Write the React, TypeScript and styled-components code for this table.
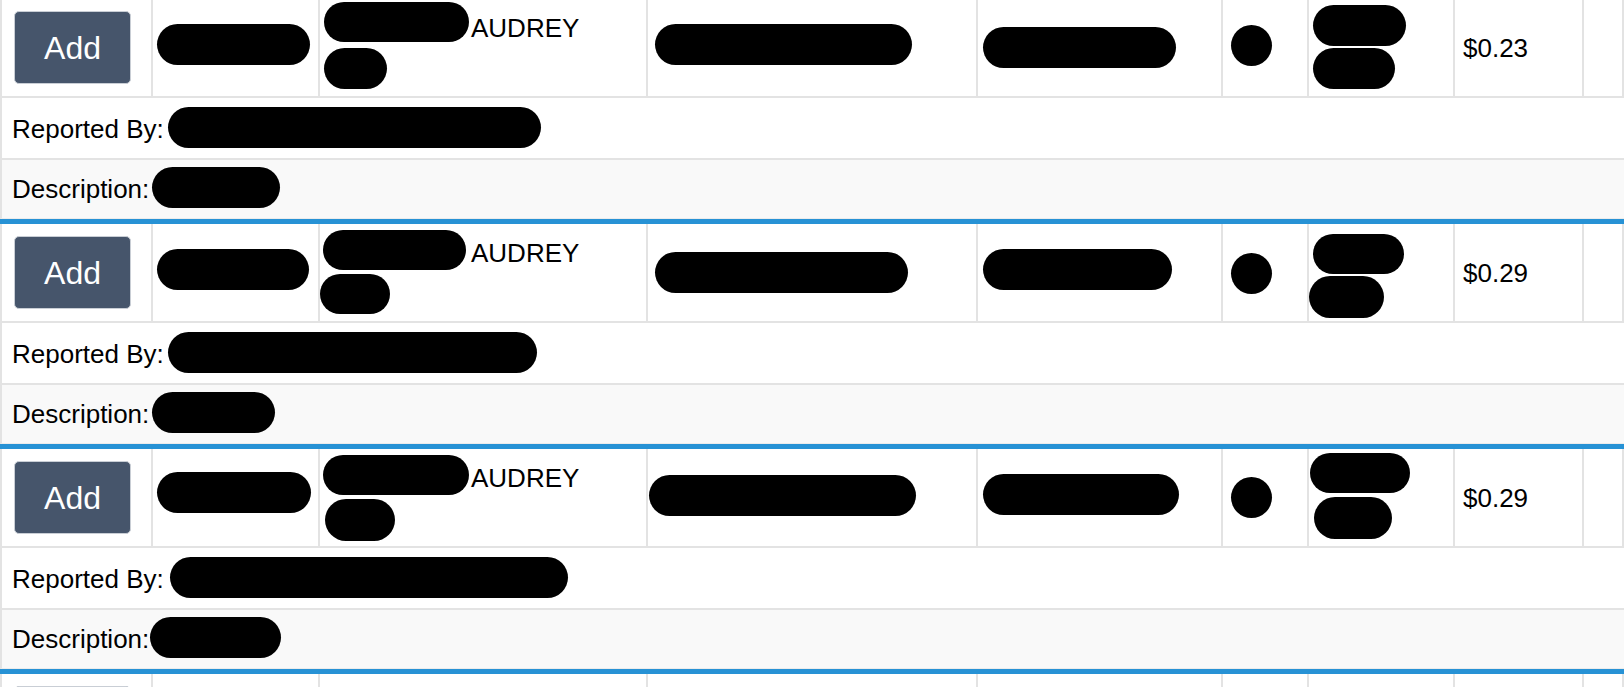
import React from 'react';
import styled, { createGlobalStyle } from 'styled-components';

const GlobalStyle = createGlobalStyle`
  html, body {
    margin: 0;
    padding: 0;
    background: #ffffff;
    overflow: hidden;
  }
  body {
    font-family: "Liberation Sans", Arial, Helvetica, sans-serif;
    font-size: 26px;
    color: #000000;
  }
`;

const GRID = '#e3e3e3';
const BLUE = '#2792d5';

type Pill = { w: number; h?: number; dx?: number; s?: number; top?: number };

interface GroupData {
  code: Pill;
  nameA: Pill;
  nameB?: Pill;
  first: string;
  firstGap: number;
  loc: Pill;
  type: Pill;
  dot: Pill;
  tags: Pill[];
  tagGap: number;
  tagShift: number;
  price: string;
  reporter: Pill;
  desc: Pill;
  partial?: boolean;
}

const groups: GroupData[] = [
  {
    code: { w: 153, s: -3 },
    nameA: { w: 145, h: 40, dx: 0, top: 0 },
    nameB: { w: 63, h: 41, dx: 0, top: 0 },
    first: 'AUDREY',
    firstGap: 2,
    loc: { w: 257, s: -3 },
    type: { w: 193, s: 0 },
    dot: { w: 41, h: 41, s: -2 },
    tags: [
      { w: 93, dx: 4 },
      { w: 82, dx: 4 },
    ],
    tagGap: 2,
    tagShift: -1,
    price: '$0.23',
    reporter: { w: 373, dx: 4 },
    desc: { w: 128, dx: 3 },
  },
  {
    code: { w: 152, s: -3 },
    nameA: { w: 143, h: 40, dx: -1, top: 3 },
    nameB: { w: 70, h: 40, dx: -4, top: 1 },
    first: 'AUDREY',
    firstGap: 5,
    loc: { w: 253, s: 0 },
    type: { w: 189, s: -3 },
    dot: { w: 41, h: 41, s: 1 },
    tags: [
      { w: 91, h: 40, dx: 4 },
      { w: 75, h: 42, dx: 0 },
    ],
    tagGap: 2,
    tagShift: 3.5,
    price: '$0.29',
    reporter: { w: 369, dx: 4 },
    desc: { w: 123, dx: 3 },
  },
  {
    code: { w: 154, s: -5 },
    nameA: { w: 146, h: 40, dx: -1, top: 3 },
    nameB: { w: 70, h: 42, dx: 1, top: 1 },
    first: 'AUDREY',
    firstGap: 2,
    loc: { w: 267, s: -2, dx: -6 },
    type: { w: 196, s: -3 },
    dot: { w: 41, h: 41, s: 0 },
    tags: [
      { w: 100, h: 40, dx: 1 },
      { w: 78, h: 42, dx: 5 },
    ],
    tagGap: 4,
    tagShift: -1.5,
    price: '$0.29',
    reporter: { w: 398, dx: 6 },
    desc: { w: 131, dx: 1 },
  },
];

/* ---------- layout ---------- */

const Table = styled.main`
  margin-top: -1px;
  width: 100%;
`;

const Group = styled.section`
  border-bottom: 5px solid ${BLUE};
`;

const MainRow = styled.div`
  display: grid;
  grid-template-columns: 151px 167px 328px 330px 245px 86px 146px 129px 1fr;
  height: 99px;
  box-sizing: border-box;
  border-left: 2px solid ${GRID};
  border-bottom: 2px solid ${GRID};
  background: #ffffff;
`;

const Cell = styled.div<{ $pl?: number }>`
  display: flex;
  align-items: center;
  min-width: 0;
  box-sizing: border-box;
  padding-left: ${(p) => p.$pl ?? 8}px;
  border-right: 2px solid ${GRID};
  overflow: hidden;
`;

const NameCell = styled(Cell)`
  flex-direction: column;
  align-items: flex-start;
  justify-content: flex-start;
  padding-top: 3px;
`;

const NameLine = styled.div`
  display: flex;
  align-items: flex-start;
  height: 46px;
`;

const FirstName = styled.span<{ $gap: number }>`
  margin: 12px 0 0 ${(p) => p.$gap}px;
  line-height: 29px;
  white-space: nowrap;
`;

const TagStack = styled.div<{ $gap: number; $mt: number; $mb: number }>`
  display: flex;
  flex-direction: column;
  align-items: flex-start;
  gap: ${(p) => p.$gap}px;
  margin: ${(p) => p.$mt}px 0 ${(p) => p.$mb}px 0;
`;

const Price = styled.span`
  margin-top: 2px;
  line-height: 29px;
  white-space: nowrap;
`;

const AddButton = styled.button`
  width: 117px;
  height: 73px;
  padding: 0;
  box-sizing: border-box;
  border: 1px solid #c9ced5;
  border-radius: 5px;
  background: #46556b;
  color: #ffffff;
  font-family: "Liberation Sans", Arial, Helvetica, sans-serif;
  font-size: 32px;
  line-height: 1;
  cursor: pointer;
`;

const PartialRow = styled(MainRow)`
  height: 40px;
  border-bottom: none;
`;

const ButtonSlot = styled.div`
  width: 117px;
  height: 73px;
  margin-top: 12px;
  align-self: flex-start;
  box-sizing: border-box;
  border: 1px solid #c9ced5;
  border-radius: 5px;
  background: #46556b;
`;

const Blot = styled.span<{ $w: number; $h?: number; $dx?: number; $mt?: number; $mb?: number }>`
  display: block;
  flex: none;
  width: ${(p) => p.$w}px;
  height: ${(p) => p.$h ?? 41}px;
  margin: ${(p) => p.$mt ?? 0}px 0 ${(p) => p.$mb ?? 0}px ${(p) => p.$dx ?? 0}px;
  border-radius: 999px;
  background: #000000;
`;

const DetailRow = styled.div<{ $shade?: boolean; $pb: number }>`
  display: flex;
  align-items: center;
  box-sizing: border-box;
  height: ${(p) => (p.$shade ? 59 : 62)}px;
  padding: 0 0 ${(p) => p.$pb}px 10px;
  border-left: 2px solid ${GRID};
  border-bottom: ${(p) => (p.$shade ? '1px solid #ececec' : `2px solid ${GRID}`)};
  background: ${(p) => (p.$shade ? '#f9f9f9' : '#ffffff')};
`;

const Label = styled.span`
  margin-top: 4px;
  line-height: 29px;
  white-space: nowrap;
`;

/* ---------- helpers ---------- */

const centered = (p: Pill) => ({
  $w: p.w,
  $h: p.h,
  $dx: p.dx,
  $mt: p.s && p.s > 0 ? 2 * p.s : 0,
  $mb: p.s && p.s < 0 ? -2 * p.s : 0,
});

const topAligned = (p: Pill) => ({
  $w: p.w,
  $h: p.h,
  $dx: p.dx,
  $mt: p.top ?? 0,
});

function ItemGroup({ g }: { g: GroupData }) {
  return (
    <Group>
      <MainRow>
        <Cell $pl={12}>
          <AddButton type="button">Add</AddButton>
        </Cell>
        <Cell $pl={4}>
          <Blot {...centered(g.code)} />
        </Cell>
        <NameCell $pl={4}>
          <NameLine>
            <Blot {...topAligned(g.nameA)} />
            <FirstName $gap={g.firstGap}>{g.first}</FirstName>
          </NameLine>
          {g.nameB && <Blot {...topAligned(g.nameB)} />}
        </NameCell>
        <Cell $pl={7}>
          <Blot {...centered(g.loc)} />
        </Cell>
        <Cell $pl={5}>
          <Blot {...centered(g.type)} />
        </Cell>
        <Cell $pl={8}>
          <Blot {...centered(g.dot)} />
        </Cell>
        <Cell $pl={0}>
          <TagStack
            $gap={g.tagGap}
            $mt={g.tagShift > 0 ? 2 * g.tagShift : 0}
            $mb={g.tagShift < 0 ? -2 * g.tagShift : 0}
          >
            {g.tags.map((t, i) => (
              <Blot key={i} $w={t.w} $h={t.h} $dx={t.dx} />
            ))}
          </TagStack>
        </Cell>
        <Cell $pl={8}>
          <Price>{g.price}</Price>
        </Cell>
        <Cell $pl={8} />
      </MainRow>
      <DetailRow $pb={2}>
        <Label>Reported By:</Label>
        <Blot {...centered(g.reporter)} />
      </DetailRow>
      <DetailRow $shade $pb={4}>
        <Label>Description:</Label>
        <Blot {...centered(g.desc)} />
      </DetailRow>
    </Group>
  );
}

export default function App() {
  return (
    <>
      <GlobalStyle />
      <Table>
        {groups.map((g, i) => (
          <ItemGroup key={i} g={g} />
        ))}
        <PartialRow aria-hidden="true">
          <Cell $pl={12}>
            <ButtonSlot />
          </Cell>
          <Cell />
          <Cell />
          <Cell />
          <Cell />
          <Cell />
          <Cell />
          <Cell />
          <Cell />
        </PartialRow>
      </Table>
    </>
  );
}
